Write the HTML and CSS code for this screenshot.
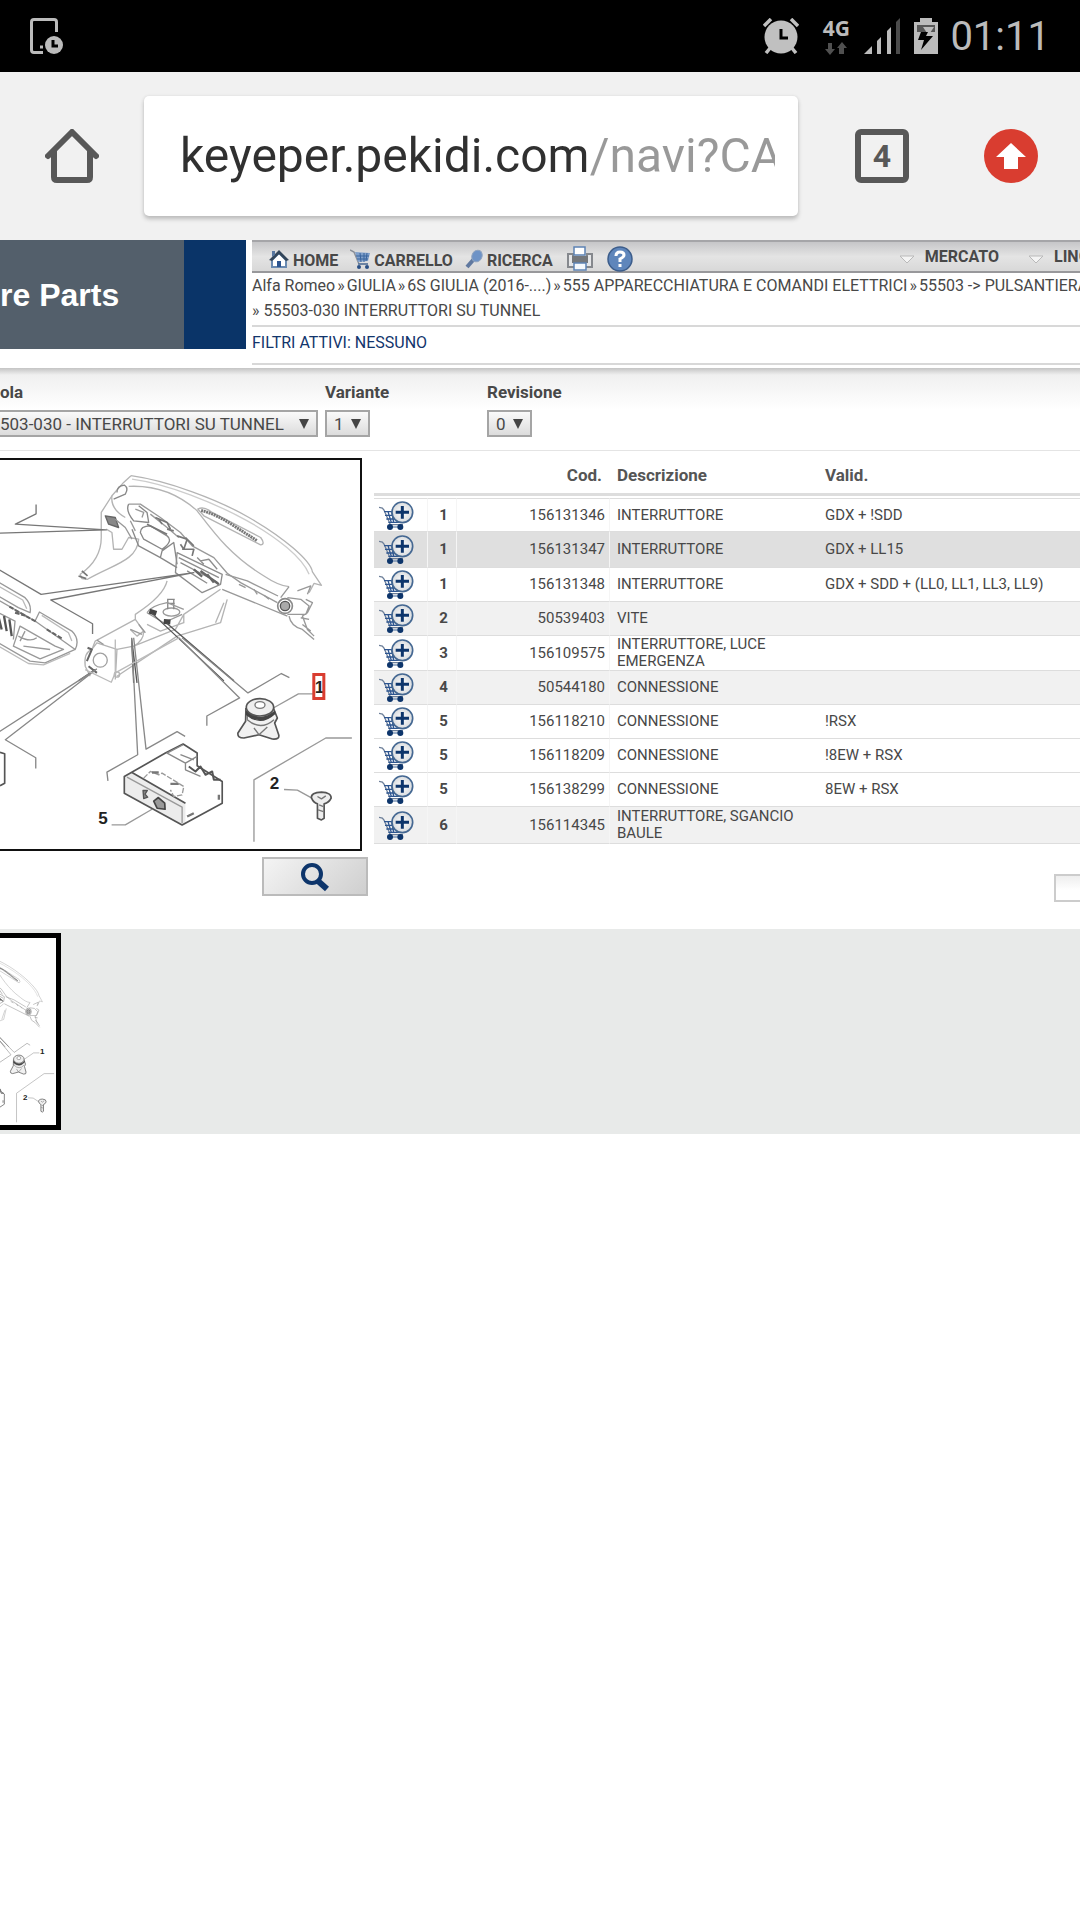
FILE: index.html
```html
<!DOCTYPE html>
<html lang="it">
<head>
<meta charset="utf-8">
<title>Interruttori su tunnel</title>
<link rel="stylesheet" href="styles.css">
</head>
<body>
<svg class="defs" aria-hidden="true">
  <defs>
    <radialGradient id="lens"><stop offset="0" stop-color="#fff"/><stop offset="1" stop-color="#d9dcdf"/></radialGradient>
    <symbol id="cart-add" viewBox="0 0 105 87">
      <path d="M0 19L10 21L15 27L34 71H72" fill="none" stroke="#6d7f99" stroke-width="4"/>
      <path d="M15 32H44M18 43H42M22 54H48M28 64H68M27 32L37 64M38 32L44 64M56 60V66" fill="none" stroke="#2d5590" stroke-width="4"/>
      <path d="M33 78H65" stroke="#6d89ad" stroke-width="4"/>
      <circle cx="33" cy="78" r="9" fill="#0d356b"/><circle cx="64" cy="78" r="9" fill="#0d356b"/>
      <circle cx="70" cy="34" r="31" fill="url(#lens)" stroke="#456892" stroke-width="5"/>
      <path d="M50 34H90M70 15V53" stroke="#0d356b" stroke-width="9"/>
    </symbol>
  </defs>
</svg>

<header class="status">
  <svg class="ico33" viewBox="0 0 33 36" fill="none" stroke="#bbb" stroke-width="3">
    <path d="M13 34.500H4Q1.500 34.500 1.500 32V4Q1.500 1.500 4 1.500H24Q26.500 1.500 26.500 4V14"/>
    <path d="M10 29H13"/><circle cx="24" cy="27" r="9" fill="#bbb" stroke="none"/><path d="M23 22V28H28" stroke="#000"/>
  </svg>
  <span class="grow"></span>
  <svg class="alarm" viewBox="0 0 36 36">
    <circle cx="18" cy="19" r="16.500" fill="#c0c0c0"/>
    <path d="M1 8L8 1M28 1L35 8M3 35L8 29M33 35L28 29" stroke="#c0c0c0" stroke-width="3.500"/>
    <path d="M18 11V20H25" fill="none" stroke="#000" stroke-width="3"/>
  </svg>
  <span class="net"><b>4G</b>
    <svg viewBox="0 0 22 13" fill="#505050"><path d="M3 1H7V7H10L5 13L0 7H3ZM17 0L22 6H19V12H14V6H12Z"/></svg>
  </span>
  <svg class="signal" viewBox="0 0 36 36" fill="#bbb"><path d="M0 36L8 28V36ZM13 23L17 19V36H13ZM23 13L27 9V36H23Z"/><path d="M32 4L36 0V36H32Z" fill="#4b4b4b"/></svg>
  <svg class="battery" viewBox="0 0 24 36"><path d="M0 4H6V0H18V4H24V36H0Z" fill="#bbb"/><path d="M3 7H21V14H3Z" fill="#555"/><path d="M9 9H20L16 15H13Z" fill="#bbb"/><path d="M7 14H14L12 18H19L7 32L10 22H4Z" fill="#000"/></svg>
  <time>01:11</time>
</header>

<div class="browser">
  <button class="plain" aria-label="Home">
    <svg viewBox="0 0 54 54" fill="none" stroke="#585858" stroke-width="6" stroke-linejoin="round" stroke-linecap="round"><path d="M3 27L27 3L51 27M9 22V48Q9 51 12 51H42Q45 51 45 48V22"/></svg>
  </button>
  <label class="url"><input type="text" aria-label="Indirizzo" value="keyeper.pekidi.com/navi?CA"></label>
  <button class="tabs">4</button>
  <button class="plain update" aria-label="Aggiorna">
    <svg viewBox="0 0 54 54"><circle cx="27" cy="27" r="27" fill="#d93d30"/><path d="M27 14L42 28H34V40H20V28H12Z" fill="#fff"/></svg>
  </button>
</div>

<main class="page">
  <div class="top">
    <div class="logo"><span>re Parts</span></div>
    <div class="head">
      <nav class="nav">
        <a href="#"><svg width="20" height="20" viewBox="0 0 20 20"><path d="M3 11V18H17V11L10 4Z" fill="#fff" stroke="#6a8ab0" stroke-width="2"/><path d="M0 11L10 1L20 11L17 12L10 5L3 12Z" fill="#33465a"/><path d="M3 2H6V6L3 8Z" fill="#5877a0"/><path d="M8 12H12V18H8Z" fill="#2d5590"/></svg><span>HOME</span></a>
        <a href="#"><svg width="20" height="20" viewBox="0 0 20 20"><path d="M0 1L4 3L9 15H18" fill="none" stroke="#8a8f98" stroke-width="1.500"/><path d="M5 3L20 4L18 12L8 13Z" fill="#7f9fca"/><path d="M6 7H19M7 10H18M10 4L11 13M14 4V13M17 4L16 12" stroke="#39649d"/><path d="M8 15H18" stroke="#39649d"/><circle cx="9" cy="18" r="2" fill="#294f85"/><circle cx="17" cy="18" r="2" fill="#294f85"/></svg><span>CARRELLO</span></a>
        <a href="#"><svg width="18" height="20" viewBox="0 0 18 20"><path d="M2 18L9 10" stroke="#6079a0" stroke-width="4"/><ellipse cx="12" cy="7" rx="5" ry="6" transform="rotate(25 12 7)" fill="#6e93c6" stroke="#8fa3bf"/></svg><span>RICERCA</span></a>
        <a href="#" class="tool" aria-label="Stampa"><svg width="26" height="25" viewBox="0 0 26 25"><path d="M1 8H6V13H20V8H25V21H1Z" fill="#e5e6e8" stroke="#85888d" stroke-width="2"/><path d="M7 1H18V9H7Z" fill="#fff" stroke="#5d83b4" stroke-width="1.500"/><path d="M5 10H21V17H5Z" fill="#74777b"/><path d="M7 17H19V24H7Z" fill="#f5f8fc" stroke="#5d83b4" stroke-width="1.500"/></svg></a>
        <a href="#" class="tool" aria-label="Aiuto"><svg width="26" height="26" viewBox="0 0 26 26"><circle cx="13" cy="13" r="12" fill="#5f86bb" stroke="#3c5d8b" stroke-width="1.500"/><path d="M9 10Q9 6 13 6Q17 6 17 9Q17 11 13 13V16M13 18V21" fill="none" stroke="#fff" stroke-width="3"/></svg></a>
        <span class="grow"></span>
        <a href="#" class="drop"><svg width="16" height="10" viewBox="0 0 16 10"><path d="M1 1H15L8 8Z" fill="#f4f4f4" stroke="#b9b9b9"/></svg>MERCATO</a>
        <a href="#" class="drop lang"><svg width="16" height="10" viewBox="0 0 16 10"><path d="M1 1H15L8 8Z" fill="#f4f4f4" stroke="#b9b9b9"/></svg>LINGUA</a>
      </nav>
      <div class="crumbs">
        <p><a href="#">Alfa Romeo</a><span>»</span><a href="#">GIULIA</a><span>»</span><a href="#">6S GIULIA (2016-....)</a><span>»</span><a href="#">555 APPARECCHIATURA E COMANDI ELETTRICI</a><span>»</span><a href="#">55503 -&gt; PULSANTIERA</a></p>
        <p><span>»</span><a href="#">55503-030 INTERRUTTORI SU TUNNEL</a></p>
      </div>
      <p class="active"><a href="#">FILTRI ATTIVI: NESSUNO</a></p>
    </div>
  </div>

  <form class="filters">
    <div><label for="tavola">ola</label><select id="tavola" class="wide"><option>503-030 - INTERRUTTORI SU TUNNEL</option></select></div>
    <div><label for="variante">Variante</label><select id="variante"><option>1</option></select></div>
    <div><label for="revisione">Revisione</label><select id="revisione"><option>0</option></select></div>
  </form>

  <div class="content">
    <div class="left">
      <svg class="drawing" viewBox="0 0 360 388" preserveAspectRatio="xMinYMin slice">
        <g id="dash" fill="none" stroke-linejoin="round">
          <g transform="translate(0 -11) scale(.3333)" stroke="#b4b4b4" stroke-width="4">
            <path d="M392 80C500 95 650 150 745 205C850 265 930 335 935 368L962 408L940 402L925 430"/>
            <path d="M395 90C500 104 640 160 740 215C830 265 905 325 925 375" stroke="#cdcdcd"/>
            <path d="M392 80L370 100L335 140Q330 180 375 205M385 112C470 108 540 140 590 185C640 250 690 320 790 380C820 400 840 410 865 412"/>
            <path d="M350 130Q350 110 372 108Q386 118 375 135L340 150" stroke="#888"/>
            <path d="M335 140L303 190V260Q305 330 240 375L245 388L262 390C340 345 410 335 415 270L385 265L365 300H340L335 250L318 240" />
            <path d="M235 380L258 388M245 365L262 380" stroke="#777" stroke-width="5"/>
            <path d="M315 200L345 205L355 235L325 225Z" fill="#888" stroke="#666"/>
            <path d="M385 165L420 165L480 205L540 250L575 290L640 325L680 372L720 400L830 460" stroke="#999" stroke-width="4"/>
            <path d="M385 165Q375 185 400 215L445 220L440 190L415 170M420 250Q420 230 450 230L500 260Q520 275 485 300L430 270ZM395 240L415 290L480 325L530 355M480 325L485 305L520 280L530 345" stroke="#888"/>
            <path d="M345 210L375 235L395 270M390 215L405 245M405 180L430 190L425 205M450 195L500 235L535 265" stroke="#999"/>
            <path d="M440 225L500 255M465 205L500 220L510 240M475 210L485 225M500 240L520 245M530 260L560 270L550 300L540 285M555 265L580 290M545 300H580L575 320" stroke="#777" stroke-width="5"/>
            <path d="M530 310L665 375L660 405L605 430L525 370ZM535 325L655 385M540 340L650 398M560 365L620 402M600 335L625 330L650 360M590 325L610 345" stroke="#8d8d8d"/>
            <path d="M580 360L605 382M600 365L655 405M620 375L640 400" stroke="#666" stroke-width="7"/>
            <path d="M592 180Q610 170 635 190L780 265Q795 285 780 287L610 200Z"/>
            <path d="M602 184Q650 196 700 230L770 275" stroke="#777" stroke-width="9" stroke-dasharray="6 2"/>
            <path d="M675 375L740 395L832 440M665 420L860 500M715 405L735 415M760 420L770 435M790 438L805 450" stroke="#999"/>
            <circle cx="853" cy="470" r="22" stroke="#8a8a8a" stroke-width="5"/><circle cx="853" cy="470" r="14" fill="#aaa" stroke="#555" stroke-width="4"/>
            <path d="M860 445L900 450L925 470L915 495L860 495M865 412L840 445M865 500Q870 530 905 540L940 570M915 450L935 460L920 490L905 500L920 540L940 560M890 425L930 410L920 435M900 505L925 510M905 525L930 545" stroke="#999"/>
            <path d="M500 395Q490 440 405 495V510L285 575L275 600Q250 610 255 650L270 680M660 420L550 495L525 540L400 590L350 600L345 690M680 450L660 520L530 560L350 680M550 495V520L480 545L440 525M405 510L430 545L410 560L390 540M645 520L670 460M350 600L290 580L275 600M400 590Q430 575 430 545"/>
            <circle cx="300" cy="632" r="21" stroke="#a0a0a0"/>
            <path d="M262 595L275 600L260 635M265 650L290 670" stroke="#666" stroke-width="6"/>
            <circle cx="350" cy="675" r="8"/>
            <ellipse cx="513" cy="488" rx="25" ry="12" stroke="#999"/><path d="M502 448V480M520 448V480M500 450H523M500 462H523" stroke="#888" stroke-width="4"/>
            <path d="M440 490Q450 470 500 460L550 480M440 490L490 520L545 495" stroke="#999"/>
            <path d="M447 485L468 492M490 516L510 518" stroke="#444" stroke-width="15"/>
            <path d="M390 540L425 555M415 525L435 550M290 572L310 585" stroke="#999"/>
            <path d="M-5 398L75 445Q95 465 90 490L55 475L-5 440M-5 452L110 518M118 488L215 545Q240 570 225 600L105 515ZM-5 580L90 635L135 640L225 600M-5 490L45 515L40 570M60 530L165 590L190 600L120 628L40 590ZM55 560Q90 580 110 565M70 590L150 600M75 545L60 575" stroke="#999"/>
            <path d="M-5 410L68 452L80 478M125 498L205 550L215 575M-5 590L85 642L130 646L210 612" stroke="#bbb"/>
            <path d="M12 500L20 545M28 510L35 560M-5 500L5 540" stroke="#555" stroke-width="7"/>
            <path d="M28 472L110 518M140 540L185 567M45 490L80 500" stroke="#666" stroke-width="6" stroke-dasharray="14 5"/>
            <path d="M108 166V194L46 225L318 242L-5 252M-5 360L123 435L580 370L152 452L277 523V554" stroke="#777"/>
            <path d="M400 700L394 568L410 700M455 492L670 694M500 522L700 694M285 660L235 694" stroke="#555"/>
          </g>
          <g transform="translate(0 179) scale(.3333)" stroke="#777" stroke-width="4">
            <path d="M394 -5L412 345L320 397L323 423M400 -5L437 328L530 276L554 290M535 -5L717 175L619 229V258M545 -5L742 160L842 102L866 114M290 88L-5 278M285 92L16 300L107 354V386" stroke="#888"/>
            <path d="M345 0V100L333 128L255 90M345 100L535 -5" stroke="#bbb"/>
            <path d="M818 205L893 163H938M334 555H375L455 508M850 449L890 451L932 474M1053 295H975L760 420V605" stroke="#999"/>
            <path d="M0 338L14 342V430L0 438" stroke="#555" stroke-width="5"/>
            <path d="M395 398L555 490V553L545 555L372 460V410Z" fill="#ececec" stroke="none"/>
            <path d="M372 410L495 340L548 313L590 340V378L665 425V490L545 555L372 460ZM395 398L555 490" stroke="#555" stroke-width="5"/>
            <path d="M380 412L545 502V550" stroke="#999"/>
            <path d="M548 315L500 340L555 370L590 350M540 345L580 360M555 370V390L600 410" stroke="#888"/>
            <path d="M565 380L585 395L600 380L615 405L635 395L640 420L660 420" stroke="#555" stroke-width="6"/>
            <path d="M430 415L450 395L475 405L485 400L550 440L545 465L520 470L510 450" stroke="#999" stroke-dasharray="16 5"/>
            <path d="M455 398H475M510 432H535M655 465V480M560 530L580 520" stroke="#777" stroke-width="7"/>
            <path d="M428 452H441L434 463L442 472L430 476Z" fill="#888" stroke="#555"/>
            <path d="M460 484L474 473L493 490L494 508L470 505Z" fill="#999" stroke="#444" stroke-width="5"/>
            <path d="M736 205L735 245L712 280Q710 295 730 295L775 285L815 298Q838 300 834 285L822 250L830 235L818 205" stroke="#555" stroke-width="5" fill="#f1f1f1"/>
            <path d="M740 240Q780 275 820 240M740 215V240M760 265L775 285L800 262" stroke="#777"/>
            <path d="M738 216Q780 250 822 216V222Q780 260 738 225Z" fill="#444" stroke="#444"/>
            <ellipse cx="778" cy="203" rx="41" ry="26" fill="#eee" stroke="#555" stroke-width="5"/><ellipse cx="778" cy="196" rx="15" ry="10" fill="#fff"/>
            <path d="M932 474Q930 458 962 457Q992 458 991 475Q985 488 970 492V535L962 540L950 535V492Q938 488 932 474Z" stroke="#555" stroke-width="5" fill="#eee"/><path d="M950 470L962 477L975 468M955 495L968 500M952 510L968 515" stroke="#777"/>
          </g>
        </g>
        <g class="marks"><text x="98" y="363">5</text><text x="269" y="328">2</text><text x="314" y="232">1</text></g>
        <path d="M313 214H323V238H313Z" fill="none" stroke="#d93d30" stroke-width="3"/>
      </svg>
      <button class="zoom" aria-label="Ingrandisci">
        <svg width="30" height="30" viewBox="0 0 30 30" fill="none" stroke="#0d356b"><circle cx="12" cy="12" r="9" stroke-width="4"/><path d="M18 19L27 27" stroke-width="6"/></svg>
      </button>
    </div>
    <div class="right">
      <table>
        <colgroup><col class="c1"><col class="c2"><col class="c3"><col class="c4"><col></colgroup>
        <thead><tr><th></th><th></th><th class="r">Cod.</th><th>Descrizione</th><th>Valid.</th></tr></thead>
        <tbody>
          <tr><td><button class="add" aria-label="Aggiungi"><svg><use href="#cart-add"/></svg></button></td><td class="n">1</td><td class="r">156131346</td><td>INTERRUTTORE</td><td>GDX + !SDD</td></tr>
          <tr class="sel"><td><button class="add" aria-label="Aggiungi"><svg><use href="#cart-add"/></svg></button></td><td class="n">1</td><td class="r">156131347</td><td>INTERRUTTORE</td><td>GDX + LL15</td></tr>
          <tr><td><button class="add" aria-label="Aggiungi"><svg><use href="#cart-add"/></svg></button></td><td class="n">1</td><td class="r">156131348</td><td>INTERRUTTORE</td><td>GDX + SDD + (LL0, LL1, LL3, LL9)</td></tr>
          <tr class="alt"><td><button class="add" aria-label="Aggiungi"><svg><use href="#cart-add"/></svg></button></td><td class="n">2</td><td class="r">50539403</td><td>VITE</td><td></td></tr>
          <tr><td><button class="add" aria-label="Aggiungi"><svg><use href="#cart-add"/></svg></button></td><td class="n">3</td><td class="r">156109575</td><td>INTERRUTTORE, LUCE EMERGENZA</td><td></td></tr>
          <tr class="alt"><td><button class="add" aria-label="Aggiungi"><svg><use href="#cart-add"/></svg></button></td><td class="n">4</td><td class="r">50544180</td><td>CONNESSIONE</td><td></td></tr>
          <tr><td><button class="add" aria-label="Aggiungi"><svg><use href="#cart-add"/></svg></button></td><td class="n">5</td><td class="r">156118210</td><td>CONNESSIONE</td><td>!RSX</td></tr>
          <tr><td><button class="add" aria-label="Aggiungi"><svg><use href="#cart-add"/></svg></button></td><td class="n">5</td><td class="r">156118209</td><td>CONNESSIONE</td><td>!8EW + RSX</td></tr>
          <tr><td><button class="add" aria-label="Aggiungi"><svg><use href="#cart-add"/></svg></button></td><td class="n">5</td><td class="r">156138299</td><td>CONNESSIONE</td><td>8EW + RSX</td></tr>
          <tr class="alt"><td><button class="add" aria-label="Aggiungi"><svg><use href="#cart-add"/></svg></button></td><td class="n">6</td><td class="r">156114345</td><td>INTERRUTTORE, SGANCIO BAULE</td><td></td></tr>
        </tbody>
      </table>
      <input class="search" type="text" aria-label="Cerca">
    </div>
  </div>

  <div class="strip">
    <a href="#" class="thumb" aria-label="Tavola">
      <svg viewBox="0 0 56 187"><use href="#dash" transform="translate(-81 5) scale(.385 .471)"/><g class="marks small"><text x="40" y="116">1</text><text x="23" y="162">2</text></g></svg>
    </a>
  </div>
</main>
</body>
</html>
```
FILE: styles.css
```css
* { box-sizing: border-box; }
body { margin: 0; background: #fff; color: #484848; font: 16px/20px Roboto, sans-serif; overflow-x: hidden; }
a { color: inherit; text-decoration: none; }
p { margin: 0; }
button { padding: 0; border: 0; background: none; font: inherit; color: inherit; }
svg { display: block; flex: none; }
.defs { position: absolute; width: 0; height: 0; }
.grow { flex: 1; }

/* phone status bar */
.status { display: flex; align-items: center; height: 72px; padding: 0 30px; background: #000; color: #bbb; }
.ico33 { width: 33px; height: 36px; }
.alarm { width: 36px; height: 36px; margin-right: 23px; }
.net { display: grid; justify-items: center; gap: 4px; width: 28px; margin-right: 14px; }
.net b { font: bold 21px/20px "Open Sans", sans-serif; }
.net svg { width: 22px; height: 13px; }
.signal { width: 36px; height: 36px; margin-right: 14px; }
.battery { width: 24px; height: 36px; margin-right: 12px; }
.status time { padding-top: 2px; font-size: 40px; line-height: 48px; }

/* browser toolbar */
.browser { display: flex; align-items: center; height: 168px; padding: 0 42px 0 45px; background: #f1f1f1; }
.plain, .plain svg { width: 54px; height: 54px; }
.url { flex: 1; min-width: 0; height: 120px; margin: 0 57px 0 45px; padding: 0 23px 0 36px; background: #fff; border-radius: 5px; box-shadow: 0 3px 4px #bbb, 0 0 3px #ddd; }
.url input { display: block; width: 100%; height: 118px; padding: 0; border: 0; outline: 0; font: 48px/56px Roboto, sans-serif; color: transparent; background: linear-gradient(90deg, #303030 406px, #999 406px); -webkit-background-clip: text; background-clip: text; }
.tabs { width: 54px; height: 54px; border: 6px solid #585858; border-radius: 6px; font-size: 32px; font-weight: bold; line-height: 40px; color: #585858; }
.update { margin-left: 75px; }

/* site header */
.page { overflow: hidden; }
.top { display: grid; grid-template-columns: 246px minmax(0, 1fr); gap: 6px; }
.logo { display: flex; align-items: center; height: 109px; background: linear-gradient(90deg, #535f6b 184px, #0a3468 184px); color: #fff; font: bold 32px/36px "Liberation Sans", sans-serif; }
.nav { display: flex; align-items: center; gap: 12px; height: 33px; padding: 4px 0 0 17px; border-top: 2px solid #a5a5a8; border-bottom: 2px solid #98989b; background: linear-gradient(#c6c6c8, #e4e4e4 50%, #d8d8d8); font-weight: bold; white-space: nowrap; }
.nav a { display: flex; align-items: center; gap: 4px; }
.nav a span { padding-top: 4px; }
.nav .tool { margin-left: 2px; }
.nav .drop { gap: 10px; padding-bottom: 4px; }
.nav .lang { width: 52px; margin-left: 17px; overflow: hidden; }
.nav .drop svg { margin-top: 6px; }
.crumbs { height: 54px; border-bottom: 2px solid #d8d8d8; line-height: 25px; white-space: nowrap; }
.crumbs p { display: flex; gap: 2px; }
.crumbs p + p { gap: 4px; }
.active { padding: 3px 0 7px; line-height: 26px; color: #12356c; border-bottom: 2px solid #d8d8d8; }

/* plate selectors */
.filters { display: grid; grid-template-columns: 318px 155px auto; justify-content: start; gap: 7px; margin-top: 3px; padding: 12px 0 13px; border-bottom: 1px solid #e4e4e4; background: linear-gradient(#c4c4c4, #f0f0f0 7px, #fff 42px); }
.filters div { display: grid; gap: 6px; justify-items: start; }
.filters label { font-weight: bold; font-size: 17px; line-height: 24px; }
select { appearance: none; width: 45px; height: 27px; padding: 0 0 0 7px; border: 2px solid #a5a5a5; border-radius: 0; font: 17px/22px Roboto, sans-serif; color: #484848;
  background: url("data:image/svg+xml,%3Csvg xmlns='http://www.w3.org/2000/svg' width='10' height='10'%3E%3Cpath d='M0 0H10L5 10Z' fill='%23444'/%3E%3C/svg%3E") right 7px center no-repeat, linear-gradient(#fafafa, #dcdcdc); }
select.wide { width: 318px; padding: 0; border-left: 0; }

/* drawing and parts list */
.content { display: grid; grid-template-columns: 368px minmax(0, 1fr); gap: 6px; padding-bottom: 27px; }
.drawing { width: 362px; height: 393px; margin-top: 7px; border: solid #111; border-width: 2px 2px 2px 0; }
.marks { font: bold 17px "Liberation Sans", sans-serif; fill: #222; }
.small { font-size: 8px; }
.zoom { display: grid; place-items: center; width: 106px; height: 39px; margin: 6px 0 0 auto; border: 2px solid #bbb; background: linear-gradient(135deg, #f4f4f4, #cfcfcf); }
.right { display: grid; justify-items: end; align-content: start; }
table { width: 100%; table-layout: fixed; border-collapse: separate; border-spacing: 0; font-size: 15px; line-height: 17px; }
.c1 { width: 54px; } .c2 { width: 29px; } .c3 { width: 153px; } .c4 { width: 208px; }
th { height: 45px; padding: 6px 7px 0; border-bottom: 3px solid #ddd; font-size: 17px; text-align: left; color: #555; }
thead::after { content: ""; display: block; height: 2px; }
td { height: 34px; padding: 0 7px; border-bottom: 1px solid #ddd; border-right: 1px solid #f5f5f5; }
td:nth-child(n+4) { border-right: 0; }
tbody tr:first-child td { border-top: 1px solid #ddd; }
.sel td { height: 36px; background: #dfdfdf; }
tbody tr:last-child td { height: 37px; }
.alt td { background: #f1f1f1; }
td:first-child { padding: 0 0 0 5px; }
td.n { padding: 0 0 0 3px; text-align: center; font-weight: bold; }
.r, th.r { text-align: right; }
td.r { padding-right: 4px; }
th.r { padding-right: 8px; }
.add, .add svg { display: block; width: 35px; height: 29px; }
.search { width: 26px; height: 28px; margin-top: 30px; border: 2px solid #ccc; border-right: 0; background: linear-gradient(#eee, #fff 14px); }

/* thumbnails */
.strip { height: 205px; padding: 4px 0; background: #e8eae9; }
.thumb { display: block; width: 61px; height: 197px; border: solid #000; border-width: 5px 5px 5px 0; background: #fff; overflow: hidden; }
.thumb svg { width: 56px; height: 187px; }
```
